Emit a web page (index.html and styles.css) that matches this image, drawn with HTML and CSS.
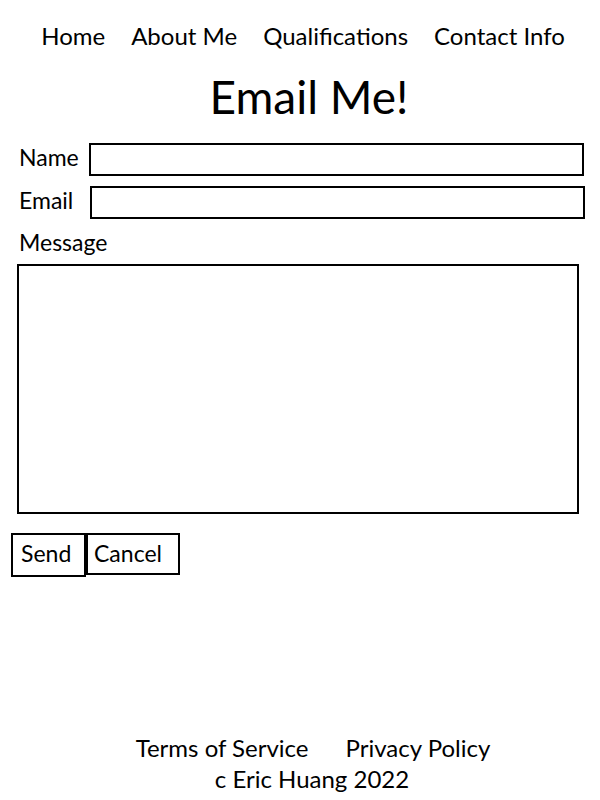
FILE: index.html
```html
<!DOCTYPE html>
<html>
<head>
<meta charset="utf-8">
<link rel="stylesheet" href="styles.css">
</head>
<body>
<nav class="nav">
  <a class="nav-link">Home</a>
  <a class="nav-link">About Me</a>
  <a class="nav-link">Qualifications</a>
  <a class="nav-link">Contact Info</a>
</nav>
<h1 class="title">Email Me!</h1>
<form class="form">
  <div class="row row-name">
    <label class="label">Name</label>
    <div class="field field-name"></div>
  </div>
  <div class="row row-email">
    <label class="label">Email</label>
    <div class="field field-email"></div>
  </div>
  <label class="label label-msg">Message</label>
  <div class="textarea"></div>
  <div class="buttons">
    <span class="btn btn-send">Send</span>
    <span class="btn btn-cancel">Cancel</span>
  </div>
</form>
<footer class="footer">
  <div class="footer-links">
    <span>Terms of Service</span>
    <span>Privacy Policy</span>
  </div>
  <div class="copy">c Eric Huang 2022</div>
</footer>
</body>
</html>
```
FILE: styles.css
```css
* { box-sizing: border-box; }
html, body { margin: 0; padding: 0; background: #fff; }
body {
  width: 600px;
  height: 800px;
  font-family: Lato, "Open Sans", sans-serif;
  color: #000;
  display: flex;
  flex-direction: column;
}
.nav {
  display: flex;
  justify-content: center;
  gap: 26px;
  padding-top: 20px;
  padding-left: 6px;
  font-size: 24px;
  line-height: 32px;
}
.title {
  margin: 17px 0 0 0;
  text-align: center;
  font-weight: 400;
  font-size: 46px;
  line-height: 56px;
  padding-left: 18px;
}
.form {
  display: flex;
  flex-direction: column;
  padding-top: 18px;
  font-size: 23px;
}
.row { display: flex; align-items: center; height: 33px; }
.row-email { margin-top: 10px; }
.label { line-height: 28px; }
.row .label { margin-left: 19px; margin-top: -6px; }
.row-name .label { width: 70px; }
.row-email .label { width: 71px; }
.field { border: 2px solid #000; height: 33px; width: 495px; }
.label-msg { margin: 9px 0 0 19px; height: 36px; }
.textarea {
  margin-left: 17px;
  width: 562px;
  height: 250px;
  border: 2px solid #000;
}
.buttons { display: flex; margin: 19px 0 0 11px; align-items: flex-start; }
.btn {
  border: 2px solid #000;
  line-height: 36px;
  padding-left: 8px;
}
.btn-send { width: 75px; height: 44px; }
.btn-cancel { width: 94px; height: 42px; padding-left: 6px; }
.footer {
  margin-top: auto;
  padding-bottom: 6px;
  text-align: center;
  font-size: 24px;
  line-height: 31px;
}
.footer-links { display: flex; justify-content: center; gap: 37px; padding-left: 26px; }
.copy { padding-left: 24px; }
```
